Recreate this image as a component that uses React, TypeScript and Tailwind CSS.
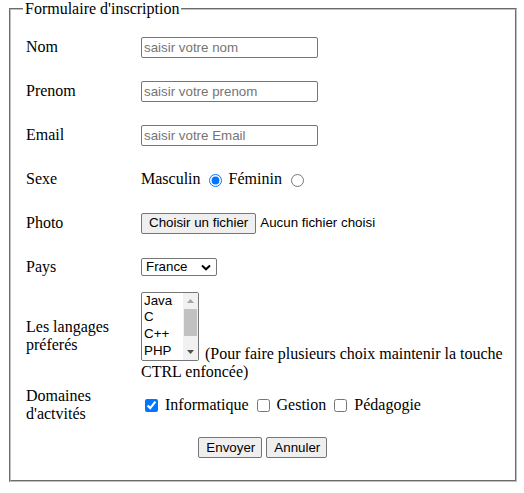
import React from "react";

const sans = "font-['Liberation_Sans',Arial,sans-serif] text-[13.33px]";

function TextInput({ placeholder }: { placeholder: string }) {
  return (
    <input
      type="text"
      placeholder={placeholder}
      className={`${sans} w-[177px] h-[21px] border border-[#767676] rounded-[2px] px-[2px] bg-white text-black placeholder:text-[#757575] outline-none`}
    />
  );
}

function Row({ label, children, h = "h-[44px]" }: { label: React.ReactNode; children: React.ReactNode; h?: string }) {
  return (
    <div className={`flex items-center ${h}`}>
      <div className="w-[118px] pl-[3px] shrink-0 leading-[18.4px]">{label}</div>
      <div className="flex-1 min-w-0">{children}</div>
    </div>
  );
}

function GrayButton({ children, className = "" }: { children: React.ReactNode; className?: string }) {
  return (
    <button
      type="button"
      className={`${sans} h-[21px] px-[7px] bg-[#efefef] border border-[#767676] rounded-[2px] text-black leading-none ${className}`}
    >
      {children}
    </button>
  );
}

export default function App() {
  const langs = ["Java", "C", "C++", "PHP"];
  return (
    <div className="bg-white text-black font-['Liberation_Serif','Times_New_Roman',serif] text-[16px]">
      <fieldset className="ml-[9px] w-[504px] h-[482px] border-2 border-[#c0c0c0] [border-style:groove] px-3 pb-0">
        <legend className="px-[2px] leading-[18px]">Formulaire d'inscription</legend>

        <div className="pt-[7px] flex flex-col">
          <Row label="Nom">
            <TextInput placeholder="saisir votre nom" />
          </Row>
          <Row label="Prenom">
            <TextInput placeholder="saisir votre prenom" />
          </Row>
          <Row label="Email">
            <TextInput placeholder="saisir votre Email" />
          </Row>

          <Row label="Sexe">
            <div className="flex items-center">
              <span>Masculin</span>
              <input type="radio" name="sexe" defaultChecked className="w-[13px] h-[13px] ml-[8px] mr-[7px] mt-[2px]" />
              <span>Féminin</span>
              <input type="radio" name="sexe" className="w-[13px] h-[13px] ml-[9px] mt-[2px]" />
            </div>
          </Row>

          <Row label="Photo">
            <div className="flex items-center">
              <GrayButton>Choisir un fichier</GrayButton>
              <span className={`${sans} ml-[4px]`}>Aucun fichier choisi</span>
            </div>
          </Row>

          <Row label="Pays">
            <div className={`${sans} w-[76px] h-[18px] border border-[#767676] rounded-[2px] flex items-center justify-between pl-[4px] pr-[5px]`}>
              <span>France</span>
              <svg width="10" height="7" viewBox="0 0 10 7">
                <path d="M1 1.5 L5 5.3 L9 1.5" fill="none" stroke="#000" strokeWidth="2" />
              </svg>
            </div>
          </Row>

          <Row
            h="h-[94px]"
            label={
              <>
                Les langages
                <br />
                préferés
              </>
            }
          >
            <div className="flex flex-col">
              <div className="flex items-end">
                <div className="w-[58px] h-[69px] shrink-0 border border-[#767676] rounded-[2px] flex bg-white">
                  <div className={`${sans} flex-1 pl-[2px] flex flex-col`}>
                    {langs.map((l) => (
                      <div key={l} className="h-[16.75px] leading-[16.75px]">
                        {l}
                      </div>
                    ))}
                  </div>
                  <div className="w-[15px] bg-[#f1f1f1] flex flex-col items-center">
                    <div className="h-[16px] flex items-center justify-center">
                      <svg width="7" height="4" viewBox="0 0 7 4">
                        <path d="M0 4 L3.5 0 L7 4 Z" fill="#a3a3a3" />
                      </svg>
                    </div>
                    <div className="w-[13px] h-[27px] bg-[#c1c1c1]" />
                    <div className="flex-1" />
                    <div className="h-[16px] flex items-center justify-center">
                      <svg width="7" height="4" viewBox="0 0 7 4">
                        <path d="M0 0 L3.5 4 L7 0 Z" fill="#505050" />
                      </svg>
                    </div>
                  </div>
                </div>
                <span className="ml-[6px] leading-[18px] mb-[-2px] whitespace-nowrap">
                  (Pour faire plusieurs choix maintenir la touche
                </span>
              </div>
              <span className="leading-[18px] mt-[2px]">CTRL enfoncée)</span>
            </div>
          </Row>

          <Row
            label={
              <>
                Domaines
                <br />
                d'actvités
              </>
            }
          >
            <div className="flex items-center">
              <input type="checkbox" defaultChecked className="w-[13px] h-[13px] ml-[4px] mr-[7px] mt-[1px]" />
              <span>Informatique</span>
              <input type="checkbox" className="w-[13px] h-[13px] ml-[8px] mr-[7px] mt-[1px]" />
              <span>Gestion</span>
              <input type="checkbox" className="w-[13px] h-[13px] ml-[8px] mr-[7px] mt-[1px]" />
              <span>Pédagogie</span>
            </div>
          </Row>

          <div className="h-[41px] flex items-center justify-center gap-[4px]">
            <GrayButton className="w-[64px]">Envoyer</GrayButton>
            <GrayButton className="w-[61px]">Annuler</GrayButton>
          </div>
        </div>
      </fieldset>
    </div>
  );
}
